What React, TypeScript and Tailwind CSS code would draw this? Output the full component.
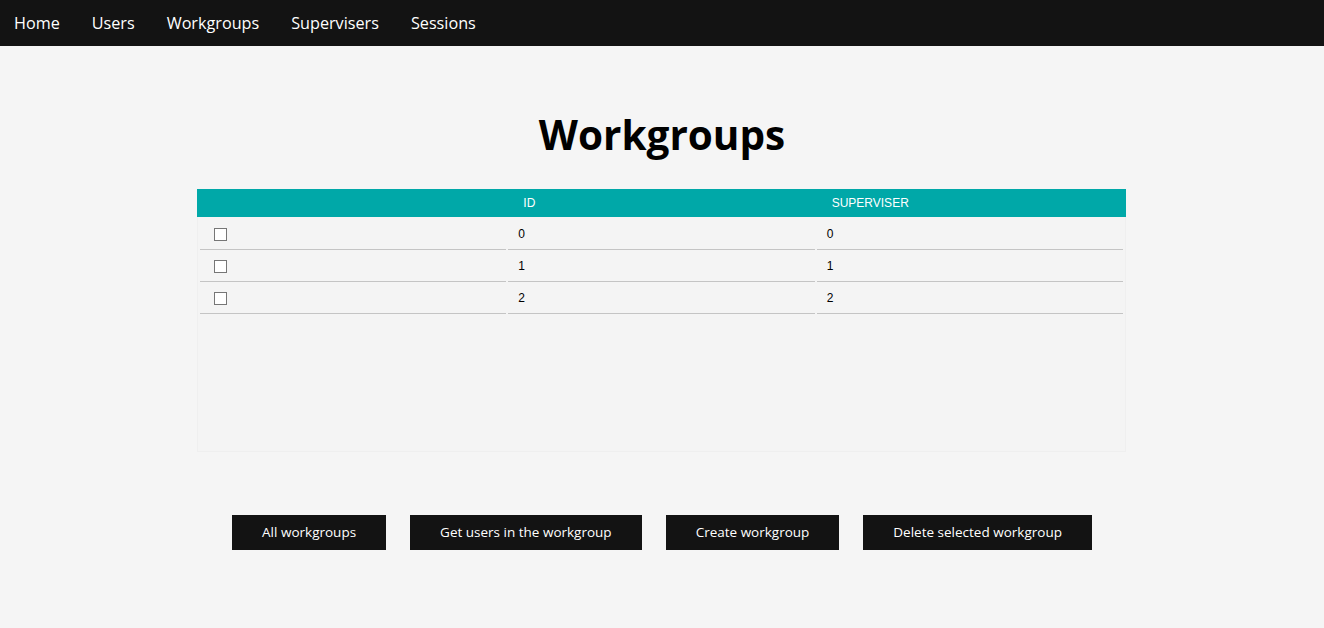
const navItems = ["Home", "Users", "Workgroups", "Supervisers", "Sessions"];
const rows = [
  { id: 0, superviser: 0 },
  { id: 1, superviser: 1 },
  { id: 2, superviser: 2 },
];
const actions = [
  "All workgroups",
  "Get users in the workgroup",
  "Create workgroup",
  "Delete selected workgroup",
];

export default function App() {
  return (
    <div className="min-h-[628px] bg-[#f5f5f5] font-['Open_Sans',sans-serif]">
      {/* Top nav */}
      <nav className="flex h-[46px] items-center gap-[32px] bg-[#131313] px-[14px]">
        {navItems.map((item) => (
          <a key={item} href="#" className="text-[16.2px] text-white">
            {item}
          </a>
        ))}
      </nav>

      {/* Title */}
      <h1 className="mt-[61px] text-center text-[40.5px] font-bold leading-[56px] text-black">
        Workgroups
      </h1>

      {/* Table */}
      <div className="mt-[26px] flex justify-center pr-px">
        <div className="h-[263px] w-[929px] border-x border-b border-[#efefef] bg-[#f4f4f4] font-['Liberation_Sans',Arial,sans-serif] text-[12px]">
          <div className="-mx-px mb-[2px] grid h-[28px] grid-cols-3 items-center gap-x-[2px] bg-[#00a8a8] px-[3px] text-white">
            <div />
            <div className="px-[15px]">ID</div>
            <div className="px-[15px]">SUPERVISER</div>
          </div>
          <div className="grid grid-cols-3 gap-x-[2px] gap-y-px px-[2px]">
            {rows.map((r) => (
              <>
                <div key={`c${r.id}`} className="flex h-[31px] items-center border-b border-[#c4c4c4] px-[10px]">
                  <input
                    type="checkbox"
                    className="m-[3px] ml-[4px] h-[13px] w-[13px] appearance-none border border-[#767676] bg-white"
                  />
                </div>
                <div key={`i${r.id}`} className="flex h-[31px] items-center border-b border-[#c4c4c4] px-[10px] text-black">
                  {r.id}
                </div>
                <div key={`s${r.id}`} className="flex h-[31px] items-center border-b border-[#c4c4c4] px-[10px] text-black">
                  {r.superviser}
                </div>
              </>
            ))}
          </div>
        </div>
      </div>

      {/* Actions */}
      <div className="mt-[63px] flex justify-center gap-[24px]">
        {actions.map((a) => (
          <button key={a} className="h-[35px] bg-[#131313] px-[30px] text-[13.5px] text-white">
            {a}
          </button>
        ))}
      </div>
    </div>
  );
}
